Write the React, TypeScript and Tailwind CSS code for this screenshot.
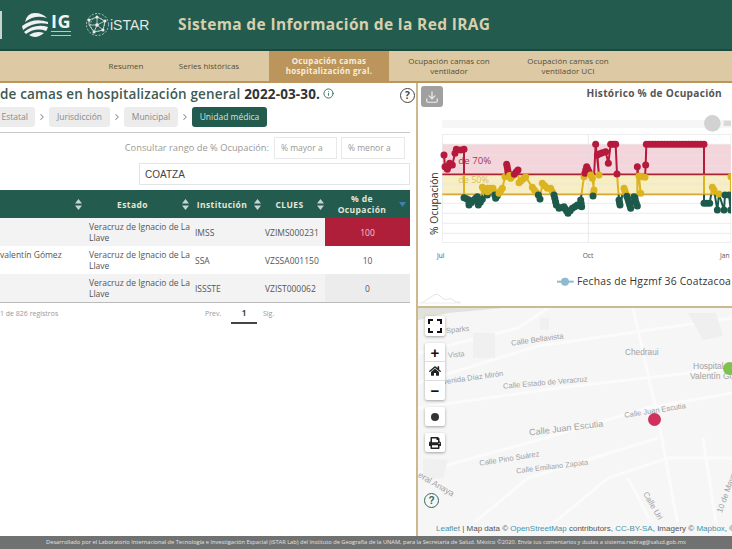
import { FC } from "react";
import { FaHome, FaPrint } from "react-icons/fa";
import { ChevronRight, Download, Info } from "lucide-react";

const raw: [number, number][] = [
  [75, 165], [78, 200], [85, 208], [92, 190], [100, 195], [108, 160], [112, 148], [125, 150], [135, 148], [135, 293],
  [150, 300], [150, 315], [165, 300], [175, 290], [178, 315], [190, 298], [190, 262], [205, 285], [205, 265], [222, 265],
  [230, 295], [240, 280], [250, 265], [258, 230], [263, 193], [268, 218], [275, 235], [297, 210], [300, 248], [320, 230],
  [340, 262], [358, 285], [363, 297], [370, 250], [385, 265], [395, 265], [405, 285], [412, 315], [420, 325], [435, 320],
  [447, 340], [460, 325], [475, 315], [488, 320], [485, 300], [495, 230], [503, 200], [510, 215], [520, 235], [525, 270],
  [522, 288], [530, 133], [540, 225], [535, 165], [550, 158], [560, 155], [568, 190], [575, 133], [590, 133], [594, 222],
  [600, 300], [603, 315], [615, 265], [620, 280], [627, 298], [635, 325], [645, 290], [655, 318], [655, 200], [665, 280],
  [660, 228], [678, 232], [680, 195], [682, 133], [855, 133], [855, 310], [872, 310], [880, 262], [885, 270], [895, 330],
  [900, 282], [915, 330], [918, 285], [930, 285], [935, 330], [936, 230],
];

// thicken the series: a dot every few px on the flat stretches, like a daily series
const pts: [number, number][] = raw.flatMap(([x, y], i) => {
  const next = raw[i + 1];
  if (!next) return [[x, y] as [number, number]];
  const dx = next[0] - x;
  const dy = next[1] - y;
  const len = Math.hypot(dx, dy);
  if (Math.abs(dy) > 30) return [[x, y] as [number, number]];
  const steps = Math.max(1, Math.round(len / 9));
  const out: [number, number][] = [];
  for (let s = 0; s < steps; s++) out.push([x + (dx * s) / steps, y + (dy * s) / steps]);
  return out;
});

const RED = "#b5193c";
const YELLOW = "#dcb41e";
const GREEN = "#1d5a4c";
const dotColor = (y: number) => (y < 224 ? RED : y < 284 ? YELLOW : GREEN);
const line = raw.map((p) => p.join(",")).join(" ");

const grid = [133, 165, 198, 222, 252, 282, 310, 340, 370, 400];

const Chart: FC = () => (
  <svg width="312" height="210" viewBox="0 0 936 630" className="block">
    <defs>
      <clipPath id="r"><rect x="0" y="0" width="936" height="224" /></clipPath>
      <clipPath id="y"><rect x="0" y="224" width="936" height="60" /></clipPath>
      <clipPath id="g"><rect x="0" y="284" width="936" height="200" /></clipPath>
    </defs>
    <rect x="70" y="60" width="866" height="24" fill="#f6f6f6" />
    <circle cx="880" cy="70" r="25" fill="#d2d2d2" />
    <rect x="914" y="62" width="22" height="16" fill="#d8d8d8" />
    <rect x="70" y="133" width="866" height="90" fill="#f5d5dc" />
    <rect x="70" y="223" width="866" height="60" fill="#f8eec4" />
    <rect x="70" y="103" width="866" height="324" fill="none" stroke="#e6e6e6" strokeWidth="2" />
    {grid.map((g) => (
      <line key={g} x1="70" x2="936" y1={g} y2={g} stroke="#e4e4e4" strokeWidth="2" />
    ))}
    <line x1="508" x2="508" y1="103" y2="427" stroke="#dedede" strokeWidth="2" />
    <text x="118" y="191" fontSize="29" fill="#a63a55" fontFamily="Open Sans, sans-serif">de 70%</text>
    <text x="118" y="250" fontSize="27" fill="#d8c25c" fontFamily="Open Sans, sans-serif">de 50%</text>
    <line x1="70" x2="936" y1="223" y2="223" stroke="#a8242f" strokeWidth="5" />
    <line x1="70" x2="936" y1="283" y2="283" stroke="#d4a93a" strokeWidth="5" />
    <polyline points={line} fill="none" stroke={RED} strokeWidth="6" clipPath="url(#r)" />
    <polyline points={line} fill="none" stroke={YELLOW} strokeWidth="6" clipPath="url(#y)" />
    <polyline points={line} fill="none" stroke={GREEN} strokeWidth="6" clipPath="url(#g)" />
    {pts.map(([x, y], i) => (
      <circle key={i} cx={x} cy={y} r="10.5" fill={dotColor(y)} />
    ))}
    <text transform="translate(58 405) rotate(-90)" fontSize="31" fill="#333" fontFamily="Open Sans, sans-serif">% Ocupación</text>
    <text x="54" y="474" fontSize="20" fill="#555" fontFamily="Open Sans, sans-serif">Jul</text>
    <text x="491" y="474" fontSize="20" fill="#555" fontFamily="Open Sans, sans-serif">Oct</text>
    <text x="903" y="474" fontSize="20" fill="#555" fontFamily="Open Sans, sans-serif">Jan</text>
    <line x1="414" x2="464" y1="545" y2="545" stroke="#8fb9d0" strokeWidth="6" />
    <circle cx="438" cy="545" r="12" fill="#8fb9d0" />
    <text x="474" y="555" fontSize="31" fill="#333" letterSpacing="0.6" fontFamily="Open Sans, sans-serif">Fechas de Hgzmf 36 Coatzacoalcos</text>
    <path d="M10 608 L45 585 Q58 578 70 595 L82 600 Q95 590 108 605 L125 608" fill="none" stroke="#d6d6d6" strokeWidth="2" />
    <line x1="0" x2="125" y1="609" y2="609" stroke="#e4e4e4" strokeWidth="2" />
  </svg>
);

const labels = [
  { t: "Calle Bellavista", c: "left-[93px] top-[26px] -rotate-[8deg] text-[7.7px]" },
  { t: "Chedraui", c: "left-[207px] top-[38px] text-[8.3px]" },
  { t: "Hospital", c: "left-[275px] top-[52px] text-[8.5px]" },
  { t: "Valentín Gómez", c: "left-[272px] top-[62px] text-[8.5px]" },
  { t: "Vista", c: "left-[30px] top-[41px] -rotate-[6deg] text-[7.5px]" },
  { t: "Sparks", c: "left-[28px] top-[16px] -rotate-[6deg] text-[7.5px]" },
  { t: "venida Díaz Mirón", c: "left-[25px] top-[64px] -rotate-[8deg] text-[7.5px]" },
  { t: "Calle Estado de Veracruz", c: "left-[85px] top-[69px] -rotate-[5deg] text-[7.5px]" },
  { t: "Calle Juan Escutia", c: "left-[111px] top-[114px] -rotate-[7deg] text-[9px]" },
  { t: "Calle Juan Escutia", c: "left-[206px] top-[97px] -rotate-[9deg] text-[7.5px]" },
  { t: "Calle Pino Suárez", c: "left-[61px] top-[145px] -rotate-[9deg] text-[7.6px]" },
  { t: "Calle Emiliano Zapata", c: "left-[98px] top-[153px] -rotate-[7deg] text-[7.4px]" },
  { t: "eral Anaya", c: "left-[-2px] top-[170px] rotate-[30deg] text-[8.5px]" },
  { t: "Calle Uri", c: "left-[219px] top-[192px] rotate-[60deg] text-[8px]" },
  { t: "10 de Mayo", c: "left-[288px] top-[179px] -rotate-[70deg] text-[8px]" },
];

const MapPanel: FC = () => (
  <div className="relative flex-1 overflow-hidden bg-[#f6f6f6] font-['Liberation_Sans',sans-serif]">
    <svg width="314" height="228" viewBox="0 0 314 228" className="absolute inset-0">
      <g stroke="#fbfbfb" fill="none" strokeWidth="3">
        <path d="M0 75 L120 38 L314 10" />
        <path d="M0 100 L140 80 L314 60" />
        <path d="M0 165 L110 135 L230 100 L314 85" />
        <path d="M40 228 L110 170 L240 130" />
        <path d="M215 0 L240 110 L262 228" />
        <path d="M0 45 L100 20 L130 0" />
        <path d="M120 228 L190 170 L250 150 L314 150" />
        <path d="M240 228 L210 170" />
        <path d="M300 228 L285 130" />
      </g>
      <rect x="55" y="25" width="22" height="25" fill="#f0f0f0" />
      <rect x="122" y="10" width="9" height="12" fill="#f0f0f0" />
      <path d="M270 5 L298 5 L305 28 L285 32 Z" fill="#efefef" />
      <path d="M0 0 L86 0 L30 5 L0 12 Z" fill="#e2e2dc" />
      <path d="M5 150 L30 152 L25 170 L5 172 Z" fill="#f0f0f0" />
    </svg>
    {labels.map((l) => (
      <span key={l.t + l.c} className={"absolute whitespace-nowrap text-[#a2a2a2] " + l.c}>
        {l.t}
      </span>
    ))}
    <span className="absolute left-[305px] top-[54px] h-[13px] w-[13px] rounded-full bg-[#7cc24c]" />
    <span className="absolute left-[230px] top-[105px] h-[13px] w-[13px] rounded-full bg-[#d1305f]" />
    <div className="absolute left-[7px] top-[8px] flex flex-col gap-[7px]">
      <button className="flex h-[20px] w-[20px] items-center justify-center rounded-[2px] bg-white shadow-[0_1px_3px_rgba(0,0,0,0.35)]">
        <svg width="14" height="14" viewBox="0 0 14 14" fill="none" stroke="#111" strokeWidth="2">
          <path d="M1 5V1h4M9 1h4v4M13 9v4H9M5 13H1V9" />
        </svg>
      </button>
      <div className="flex w-[20px] flex-col rounded-[2px] bg-white shadow-[0_1px_3px_rgba(0,0,0,0.35)]">
        <span className="flex h-[19px] items-center justify-center border-b border-[#ddd] text-[15px] font-bold leading-none text-[#111]">+</span>
        <span className="flex h-[19px] items-center justify-center border-b border-[#ddd]"><FaHome size={12} color="#222" /></span>
        <span className="flex h-[19px] items-center justify-center text-[15px] font-bold leading-none text-[#111]">−</span>
      </div>
      <button className="flex h-[19px] w-[20px] items-center justify-center rounded-[2px] bg-white shadow-[0_1px_3px_rgba(0,0,0,0.35)]">
        <span className="h-[8px] w-[8px] rounded-full bg-[#333]" />
      </button>
      <button className="flex h-[19px] w-[20px] items-center justify-center rounded-[2px] bg-white shadow-[0_1px_3px_rgba(0,0,0,0.35)]">
        <FaPrint size={12} color="#222" />
      </button>
    </div>
    <span className="absolute left-[6px] top-[185px] flex h-[15px] w-[15px] items-center justify-center rounded-full border-[1.5px] border-[#2f6b5c] text-[10px] font-bold leading-none text-[#2f6b5c]">?</span>
    <div className="absolute bottom-0 left-[18px] whitespace-nowrap bg-[#f6f6f6]/80 text-[8px] leading-[14px] text-[#555]">
      <span className="text-[#4a93a8]">Leaflet</span> | Map data © <span className="text-[#4a93a8]">OpenStreetMap</span> contributors, <span className="text-[#4a93a8]">CC-BY-SA</span>, Imagery © <span className="text-[#4a93a8]">Mapbox</span>, ©
    </div>
  </div>
);

const HeaderCell: FC<{ label: string; arrow?: string; wrap?: boolean }> = ({ label, arrow = "#c8d6d2", wrap }) => (
  <div className={"flex items-center justify-between " + (wrap ? "pr-[4px]" : "pr-[1px]")}>
    <span className={"flex-1 text-center text-[8.5px] font-bold leading-[11px] tracking-[0.4px] text-[#e6e6d8] " + (wrap ? "px-[12px]" : "")}>{label}</span>
    <svg width="7" height="11" viewBox="0 0 7 11" fill={arrow} className="shrink-0">
      {wrap ? <path d="M0 3h7L3.5 8z" /> : <path d="M3.5 0L7 4.5H0zM3.5 11L0 6.5h7z" />}
    </svg>
  </div>
);

const rows = [
  { name: "", inst: "IMSS", clues: "VZIMS000231", pct: "100", cls: "bg-[#b01f3a] text-[#f0c8cf]", bg: "bg-[#f3f3f3]" },
  { name: "valentín Gómez", inst: "SSA", clues: "VZSSA001150", pct: "10", cls: "text-[#555]", bg: "bg-white" },
  { name: "", inst: "ISSSTE", clues: "VZIST000062", pct: "0", cls: "bg-[#ececec] text-[#555]", bg: "bg-[#f3f3f3]" },
];

const App: FC = () => {
  return (
    <div className="flex h-[549px] w-[732px] flex-col overflow-hidden bg-white font-['Open_Sans',sans-serif]">
      <header className="flex h-[51px] shrink-0 items-center border-b-2 border-[#1b4a3f] bg-[#235b4e]">
        <div className="h-[28px] w-[2px] bg-[#c9d4cf]" />
        <svg width="26" height="24" viewBox="0 0 26 24" className="ml-[20px]" fill="#f2f2f2">
          <path d="M3 9 Q13 1 25 5 Q20 0 13 0 Q5 0 3 9Z" />
          <path d="M0 13 Q12 4 26 9 L26 11 Q12 8 1 17Z" />
          <path d="M2 19 Q13 10 26 14 Q25 17 24 18 Q14 14 4 21Z" />
          <path d="M7 22 Q14 17 22 20 Q17 24 13 24 Q10 24 7 22Z" />
        </svg>
        <div className="ml-[1px] flex w-[24px] flex-col items-center">
          <span className="text-[18px] font-bold leading-[15px] tracking-[0.5px] text-[#f2f2f2]">IG</span>
          <span className="mt-[2px] h-[5px] w-[20px] border-y border-[#b9c9c3]" />
        </div>
        <svg width="25" height="25" viewBox="0 0 25 25" className="ml-[12px]" fill="none" stroke="#d9e0dc" strokeWidth="0.8">
          <circle cx="12.5" cy="12.5" r="11" strokeDasharray="2 1.5" />
          <circle cx="12.5" cy="12.5" r="7" strokeDasharray="1.5 1.5" />
          <path d="M4 8L12 5L20 9L18 18L9 20L4 13ZM12 5L12 13L20 9M12 13L18 18M12 13L9 20M12 13L4 13" />
          <g fill="#e8ece9" stroke="none">
            <circle cx="4" cy="8" r="1.5" /><circle cx="12" cy="5" r="1.5" /><circle cx="20" cy="9" r="1.5" />
            <circle cx="18" cy="18" r="1.5" /><circle cx="9" cy="20" r="1.5" /><circle cx="12" cy="13" r="1.8" />
          </g>
        </svg>
        <span className="ml-[0px] w-[43px] font-['Liberation_Sans',sans-serif] text-[14px] leading-none text-[#e4e8e4]">iSTAR</span>
        <h1 className="ml-[25px] whitespace-nowrap font-['Open_Sans',sans-serif] text-[15.5px] font-bold tracking-[0.36px] text-[#d6d0b0]">
          Sistema de Información de la Red IRAG
        </h1>
      </header>

      <nav className="flex h-[32px] shrink-0 items-stretch border-b-2 border-[#bc955c] bg-[#ddc9a3] pl-[90px] text-center text-[8px] leading-[9.5px] text-[#54503c]">
        <a className="flex w-[72px] items-center justify-center pb-[1px]">Resumen</a>
        <a className="flex w-[94px] items-center justify-center pb-[1px]">Series históricas</a>
        <span className="w-[13px]" />
        <a className="flex w-[120px] items-center justify-center bg-[#bc955c] pb-[1px] font-bold tracking-[0.3px] text-[#f6eedd]">
          Ocupación camas<br />hospitalización gral.
        </a>
        <a className="flex w-[120px] items-center justify-center pb-[1px]">Ocupación camas con<br />ventilador</a>
        <a className="flex w-[118px] items-center justify-center pb-[1px]">Ocupación camas con<br />ventilador UCI</a>
      </nav>

      <main className="flex min-h-0 flex-1">
        <section className="flex w-[418px] shrink-0 flex-col border-r-2 border-[#cdb98f]">
          <div className="flex h-[24px] shrink-0 items-center pr-[1px]">
            <h2 className="whitespace-nowrap text-[13.5px] font-semibold leading-none tracking-[0.15px] text-[#3e5a53]">
              de camas en hospitalización general <span className="font-bold text-[#333]">2022-03-30.</span>
            </h2>
            <Info size={11} className="ml-[3px] mt-[-4px] text-[#2f6b5c]" />
            <span className="ml-auto flex h-[15px] w-[15px] items-center justify-center rounded-full border-[1.5px] border-[#444] text-[10px] font-bold leading-none text-[#444]">?</span>
          </div>
          <div className="flex h-[20px] shrink-0 items-stretch text-[8.5px] text-[#8b8b8b]">
            <span className="flex w-[35px] items-center justify-end rounded-r-[3px] bg-[#ececec] pr-[7px]">Estatal</span>
            <span className="flex w-[14px] items-center justify-center"><ChevronRight size={10} strokeWidth={2.5} /></span>
            <span className="flex w-[61px] items-center justify-center rounded-[3px] bg-[#ececec]">Jurisdicción</span>
            <span className="flex w-[14px] items-center justify-center"><ChevronRight size={10} strokeWidth={2.5} /></span>
            <span className="flex w-[54px] items-center justify-center rounded-[3px] bg-[#ececec]">Municipal</span>
            <span className="flex w-[14px] items-center justify-center"><ChevronRight size={10} strokeWidth={2.5} /></span>
            <span className="flex w-[75px] items-center justify-center rounded-[3px] bg-[#235b4e] text-[#d5e2dc]">Unidad médica</span>
          </div>
          <div className="mt-[5px] h-px w-[410px] shrink-0 bg-[#c8c8c8]" />
          <div className="mt-[4px] flex h-[22px] w-[405px] shrink-0 items-stretch justify-end gap-[4px] text-[8.5px] text-[#999]">
            <span className="mr-[1px] flex items-center text-[9.3px]">Consultar rango de % Ocupación:</span>
            <span className="flex w-[63px] items-center border border-[#e8e8e8] pl-[6px]">% mayor a</span>
            <span className="flex w-[64px] items-center border border-[#e8e8e8] pl-[6px]">% menor a</span>
          </div>
          <div className="ml-[139px] mt-[4px] flex h-[22px] w-[271px] shrink-0 items-center border border-[#e4e4e4] pl-[5px] font-['Liberation_Sans',sans-serif] text-[10px] text-[#444]">
            COATZA
          </div>
          <div className="mt-[5px] w-[410px] shrink-0">
            <div className="grid h-[28px] grid-cols-[83px_107px_72px_63px_85px] items-center bg-[#235b4e]">
              <HeaderCell label="" />
              <HeaderCell label="Estado" />
              <HeaderCell label="Institución" />
              <HeaderCell label="CLUES" />
              <HeaderCell label="% de Ocupación" arrow="#3f7fb0" wrap />
            </div>
            {rows.map((r) => (
              <div key={r.clues} className={"grid h-[28px] grid-cols-[83px_107px_72px_63px_85px] items-center text-[8.5px] leading-[11px] text-[#555] " + r.bg}>
                <span className="self-start whitespace-nowrap pt-[3px]">{r.name}</span>
                <span className="pl-[6px]">Veracruz de Ignacio de La Llave</span>
                <span className="pl-[5px]">{r.inst}</span>
                <span className="pl-[3px]">{r.clues}</span>
                <span className={"flex h-full items-center justify-center " + r.cls}>{r.pct}</span>
              </div>
            ))}
            <div className="h-px bg-[#bbb]" />
            <div className="relative mt-[1px] flex items-center text-[7px] text-[#999]">
              <span className="w-[205px] whitespace-nowrap">1 de 826 registros</span>
              <span className="w-[26px]">Prev.</span>
              <span className="w-[26px] border-b-2 border-[#444] pb-[3px] pt-[3px] text-center text-[8px] font-bold text-[#444]">1</span>
              <span className="ml-[6px]">Sig.</span>
            </div>
          </div>
        </section>

        <section className="flex min-w-0 flex-1 flex-col">
          <div className="relative flex h-[225px] shrink-0 flex-col overflow-hidden border-b-2 border-[#cdb98f]">
            <div className="flex h-[17px] shrink-0 items-end justify-end pr-[10px] text-[10.1px] font-bold leading-[14px] tracking-[0.3px] text-[#555]">
              Histórico % de Ocupación
            </div>
            <div className="ml-[1px]"><Chart /></div>
            <button className="absolute left-[3px] top-[3px] flex h-[21px] w-[22px] items-center justify-center rounded-[3px] bg-[#a0a0a0]">
              <Download size={14} color="#eee" />
            </button>
          </div>
          <MapPanel />
        </section>
      </main>

      <footer className="flex h-[13px] shrink-0 items-center justify-center whitespace-nowrap bg-[#6f7271] text-[5.7px] text-[#e2e2e2]">
        Desarrollado por el Laboratorio Internacional de Tecnología e Investigación Espacial (iSTAR Lab) del Instituto de Geografía de la UNAM, para la Secretaría de Salud. México ©2020. Envía tus comentarios y dudas a sistema.redirag@salud.gob.mx
      </footer>
    </div>
  );
};

export default App;
